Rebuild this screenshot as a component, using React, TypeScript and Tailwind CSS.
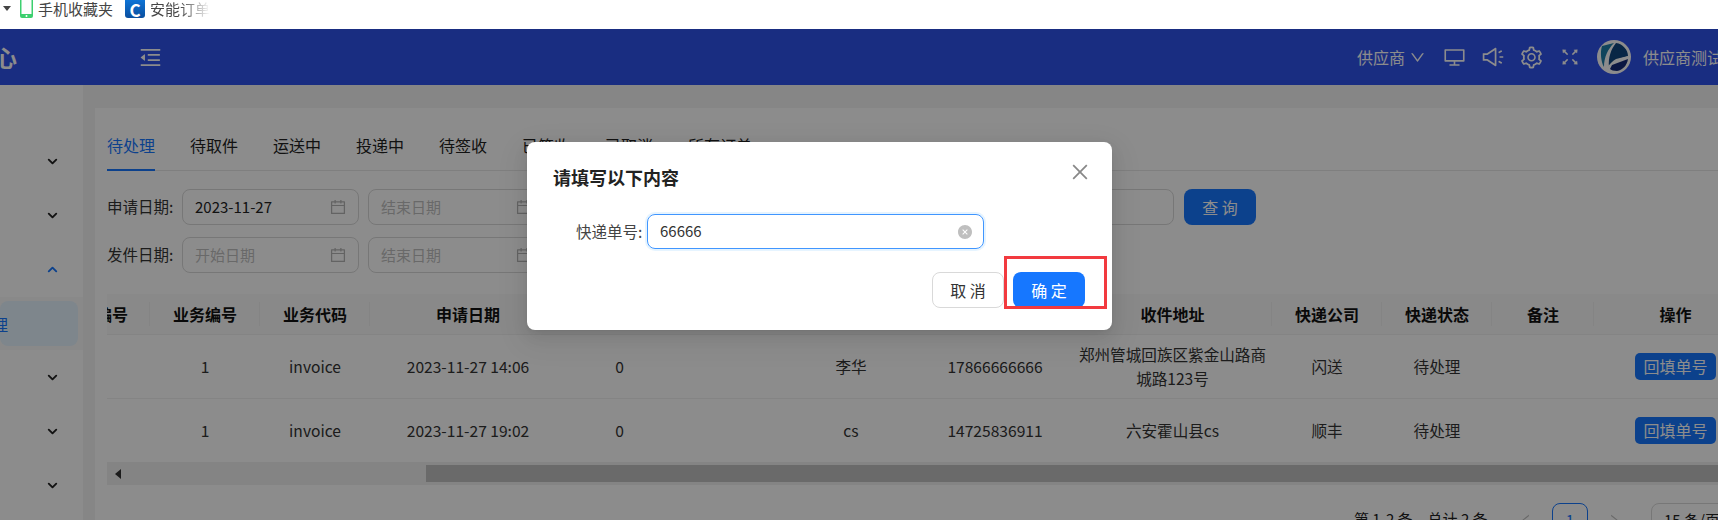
import {
  AiFillCloseCircle,
  AiOutlineCalendar,
  AiOutlineClose,
  AiOutlineDesktop,
  AiOutlineDown,
  AiOutlineFullscreen,
  AiOutlineLeft,
  AiOutlineMenuFold,
  AiOutlineRight,
  AiOutlineSetting,
  AiOutlineSound,
} from "react-icons/ai";
import { ChevronDown, ChevronUp } from "lucide-react";

const tabs = ["待处理", "待取件", "运送中", "投递中", "待签收", "已签收", "已取消", "所有订单"];

const columns = [
  { title: "订单编号", width: "w-[108px]" },
  { title: "业务编号", width: "w-[110px]" },
  { title: "业务代码", width: "w-[110px]" },
  { title: "申请日期", width: "w-[196px]" },
  { title: "订单金额", width: "w-[107px]" },
  { title: "发件人", width: "w-[112px]" },
  { title: "收件人", width: "w-[132px]" },
  { title: "联系电话", width: "w-[156px]" },
  { title: "收件地址", width: "w-[199px]" },
  { title: "快递公司", width: "w-[110px]" },
  { title: "快递状态", width: "w-[110px]" },
  { title: "备注", width: "w-[102px]" },
  { title: "操作", width: "w-[163px]" },
];

const rows = [
  ["", "1", "invoice", "2023-11-27 14:06", "0", "", "李华", "17866666666", "郑州管城回族区紫金山路商城路123号", "闪送", "待处理", ""],
  ["", "1", "invoice", "2023-11-27 19:02", "0", "", "cs", "14725836911", "六安霍山县cs", "顺丰", "待处理", ""],
];

function DateInput({ value, placeholder }: { value?: string; placeholder?: string }) {
  return (
    <div className="flex h-[36px] w-[177px] shrink-0 items-center rounded-lg border border-[#d9d9d9] bg-white pl-[12px] pr-[11px]">
      <span className={value ? "flex-1 text-[15px] text-[#222]" : "flex-1 text-[15px] text-[#bfbfbf]"}>
        {value ?? placeholder}
      </span>
      <AiOutlineCalendar className="h-[18px] w-[18px] text-[#b5b5b5]" />
    </div>
  );
}

function MenuRow({ open }: { open?: boolean }) {
  return (
    <div className={open ? "flex h-[55px] items-center justify-end pr-[23px]" : "flex h-[54px] items-center justify-end pr-[23px]"}>
      {open ? (
        <ChevronUp className="h-[15px] w-[15px] text-[#1677ff]" strokeWidth={3} />
      ) : (
        <ChevronDown className="h-[15px] w-[15px] text-[#222]" strokeWidth={3} />
      )}
    </div>
  );
}

function Avatar() {
  return (
    <svg viewBox="0 0 34 34" className="h-[34px] w-[34px] shrink-0">
      <circle cx="17" cy="17" r="17" fill="#fff" />
      <path d="M5 6 L17 3 C11 9 7 17 7 27 C4 22 3 12 5 6Z" fill="#1e7fa8" />
      <path d="M19 3 C26 4 31 10 31 16 L19 19 C15 21 13 24 12 27 C11 18 14 9 19 3Z" fill="#10457e" />
      <path d="M15 25 L31 19 C30 25 26 30 20 31 C17 31 14 30 13 29Z" fill="#142a78" />
      <path d="M11 29 C12 24 18 20 31 17" fill="none" stroke="#fff" strokeWidth="1.6" />
    </svg>
  );
}

export default function App() {
  return (
    <div className="relative flex h-[520px] w-full flex-col overflow-hidden bg-white font-['Noto_Sans_CJK_SC','Noto_Sans',sans-serif] text-[16px] text-[#222]">
      {/* bookmarks bar */}
      <div className="flex h-[29px] shrink-0 items-start bg-white text-[15px] leading-[17px] text-[#444]">
        <svg viewBox="0 0 8 5" className="ml-[3px] mt-[6px] h-[5px] w-[8px]">
          <path d="M0 0 H8 L4 5Z" fill="#444" />
        </svg>
        <svg viewBox="0 0 13 18" className="ml-[9px] h-[18px] w-[13px]">
          <rect x="0" y="-3" width="13" height="21" rx="2" fill="#3ccf6e" />
          <rect x="1.5" y="-2" width="10" height="16" fill="#fdfdfd" />
          <circle cx="6.5" cy="16" r="1" fill="#fff" />
        </svg>
        <span className="ml-[5px]">手机收藏夹</span>
        <div className="ml-[12px] flex h-[18px] w-[20px] items-center justify-center rounded-b-[3px] bg-gradient-to-b from-[#0e74d6] to-[#0a4f9f] text-[17px] font-bold text-white">
          C
        </div>
        <span className="ml-[5px] bg-gradient-to-r from-[#444] from-50% to-transparent bg-clip-text text-transparent">安能订单</span>
      </div>

      {/* top nav */}
      <header className="flex h-[56px] shrink-0 items-center bg-[#2f52ec] text-white">
        <span className="-ml-[6px] w-[23px] shrink-0 whitespace-nowrap text-[23px] font-bold">心</span>
        <AiOutlineMenuFold className="ml-[121px] h-[25px] w-[25px] shrink-0" />
        <span className="ml-[1194px] shrink-0 whitespace-nowrap">供应商</span>
        <AiOutlineDown className="ml-[4px] h-[17px] w-[17px] shrink-0" />
        <AiOutlineDesktop className="ml-[17px] h-[23px] w-[23px] shrink-0" />
        <AiOutlineSound className="ml-[15px] h-[24px] w-[24px] shrink-0" />
        <AiOutlineSetting className="ml-[14px] h-[25px] w-[25px] shrink-0" />
        <AiOutlineFullscreen className="ml-[15px] h-[22px] w-[22px] shrink-0" />
        <div className="ml-[16px] shrink-0">
          <Avatar />
        </div>
        <span className="ml-[12px] shrink-0 whitespace-nowrap">供应商测试</span>
      </header>

      <div className="flex min-h-0 flex-1">
        {/* side menu */}
        <aside className="w-[83px] shrink-0 bg-white pt-[49px]">
          <MenuRow />
          <MenuRow />
          <MenuRow open />
          <div className="flex h-[53px] items-center bg-[#fafafa] pr-[5px]">
            <div className="flex h-[45px] w-full items-center overflow-hidden rounded-lg bg-[#e6f4ff] text-[#1677ff]">
              <span className="-ml-[8px]">理</span>
            </div>
          </div>
          <MenuRow />
          <MenuRow />
          <MenuRow />
        </aside>

        <main className="min-w-0 flex-1 bg-[#f5f5f5] pl-[12px] pt-[23px]">
          <div className="h-full overflow-hidden bg-white pl-[12px] pt-[25px]">
            {/* tabs */}
            <div className="flex h-[38px] gap-[35px] border-b border-[#e8e8e8]">
              {tabs.map((tab, i) => (
                <div
                  key={tab}
                  className={
                    i === 0
                      ? "h-[38px] whitespace-nowrap border-b-2 border-[#1677ff] leading-[24px] text-[#1677ff]"
                      : "h-[38px] whitespace-nowrap leading-[24px]"
                  }
                >
                  {tab}
                </div>
              ))}
            </div>

            {/* filters */}
            <div className="mt-[18px] flex items-center">
              <span className="w-[75px] shrink-0 whitespace-nowrap text-[15.5px] text-[#333]">申请日期:</span>
              <DateInput value="2023-11-27" />
              <div className="ml-[9px]">
                <DateInput placeholder="结束日期" />
              </div>
              <div className="ml-[355px] h-[36px] w-[274px] shrink-0 rounded-lg border border-[#d9d9d9]" />
              <button className="ml-[10px] h-[36px] w-[72px] shrink-0 rounded-lg bg-[#1677ff] text-white">查 询</button>
            </div>
            <div className="mt-[12px] flex items-center">
              <span className="w-[75px] shrink-0 whitespace-nowrap text-[15.5px] text-[#333]">发件日期:</span>
              <DateInput placeholder="开始日期" />
              <div className="ml-[9px]">
                <DateInput placeholder="结束日期" />
              </div>
            </div>

            {/* table, scrolled sideways */}
            <div className="mt-[21px] overflow-hidden">
              <table className="-ml-[65px] w-[1615px] table-fixed border-collapse text-center">
                <colgroup>
                  {columns.map((col) => (
                    <col key={col.title} className={col.width} />
                  ))}
                </colgroup>
                <thead>
                  <tr className="h-[40px] bg-[#fafafa] font-bold text-[#111]">
                    {columns.map((col, i) => (
                      <th key={col.title} className="relative border-b border-[#f0f0f0] font-bold">
                        {col.title}
                        {i < columns.length - 1 && (
                          <span className="absolute right-0 top-[8px] h-[24px] w-px bg-[#f0f0f0]" />
                        )}
                      </th>
                    ))}
                  </tr>
                </thead>
                <tbody>
                  {rows.map((row, r) => (
                    <tr key={r} className="h-[64px] text-[15.6px] text-[#333]">
                      {row.map((cell, c) => (
                        <td key={c} className="border-b border-[#f0f0f0] px-[4px] leading-[24px]">
                          {cell}
                        </td>
                      ))}
                      <td className="border-b border-[#f0f0f0]">
                        <button className="h-[27px] w-[81px] rounded-[5px] bg-[#1677ff] text-[16px] leading-[27px] text-white">
                          回填单号
                        </button>
                      </td>
                    </tr>
                  ))}
                </tbody>
              </table>
              {/* scrollbar */}
              <div className="flex h-[22px] items-center bg-[#f1f1f1]">
                <svg viewBox="0 0 6 10" className="ml-[8px] h-[10px] w-[6px] shrink-0">
                  <path d="M6 0 V10 L0 5Z" fill="#333" />
                </svg>
                <div className="ml-[305px] h-[17px] flex-1 bg-[#c1c1c1]" />
              </div>
            </div>

            {/* pagination */}
            <div className="ml-[1247px] mt-[18px] flex items-start whitespace-nowrap text-[15px]">
              <span className="mt-[5px] w-[144px] shrink-0">第 1-2 条，总计 2 条</span>
              <AiOutlineLeft className="ml-[21px] mt-[10px] h-[14px] w-[14px] shrink-0 text-[#c0c0c0]" />
              <div className="ml-[19px] flex h-[36px] w-[36px] shrink-0 items-center justify-center rounded-lg border border-[#1677ff] text-[#1677ff]">
                1
              </div>
              <AiOutlineRight className="ml-[19px] mt-[10px] h-[14px] w-[14px] shrink-0 text-[#c0c0c0]" />
              <div className="ml-[30px] h-[36px] w-[100px] shrink-0 rounded-lg border border-[#d9d9d9] pl-[12px] pt-[5px]">15 条/页</div>
            </div>
          </div>
        </main>
      </div>

      {/* modal mask + dialog */}
      <div className="absolute inset-x-0 bottom-0 top-[29px] bg-black/45 pl-[527px] pt-[113px]">
        <div className="relative h-[188px] w-[585px] rounded-lg bg-white pt-[23px] shadow-[0_6px_16px_rgba(0,0,0,0.08),0_3px_6px_-4px_rgba(0,0,0,0.12),0_9px_28px_8px_rgba(0,0,0,0.05)]">
          <div className="flex h-[24px] items-center pl-[26px] pr-[21px]">
            <h2 className="flex-1 text-[18px] font-bold leading-[24px] text-[#222]">请填写以下内容</h2>
            <AiOutlineClose className="-mt-[10px] h-[22px] w-[22px] text-[#888]" />
          </div>
          <div className="mt-[25px] flex items-center pl-[49px]">
            <span className="w-[71px] shrink-0 whitespace-nowrap text-[15.5px] text-[#444]">快递单号:</span>
            <div className="flex h-[35px] w-[337px] items-center rounded-lg border border-[#4096ff] pl-[12px] pr-[10px] shadow-[0_0_0_2px_rgba(5,145,255,0.1)]">
              <span className="flex-1 text-[15px] text-[#333]">66666</span>
              <AiFillCloseCircle className="h-[16px] w-[16px] text-[#bfbfbf]" />
            </div>
          </div>
          <div className="mt-[23px] flex justify-end gap-[9px] pr-[27px]">
            <button className="h-[36px] w-[72px] rounded-lg border border-[#d9d9d9] bg-white text-[#333]">取 消</button>
            <button className="h-[36px] w-[72px] rounded-lg bg-[#1677ff] text-white">确 定</button>
          </div>
          {/* red mark-up box drawn over the screenshot */}
          <div className="absolute left-[477px] top-[114px] h-[53px] w-[103px] border-[3px] border-[#f23a3f]" />
        </div>
      </div>
    </div>
  );
}
